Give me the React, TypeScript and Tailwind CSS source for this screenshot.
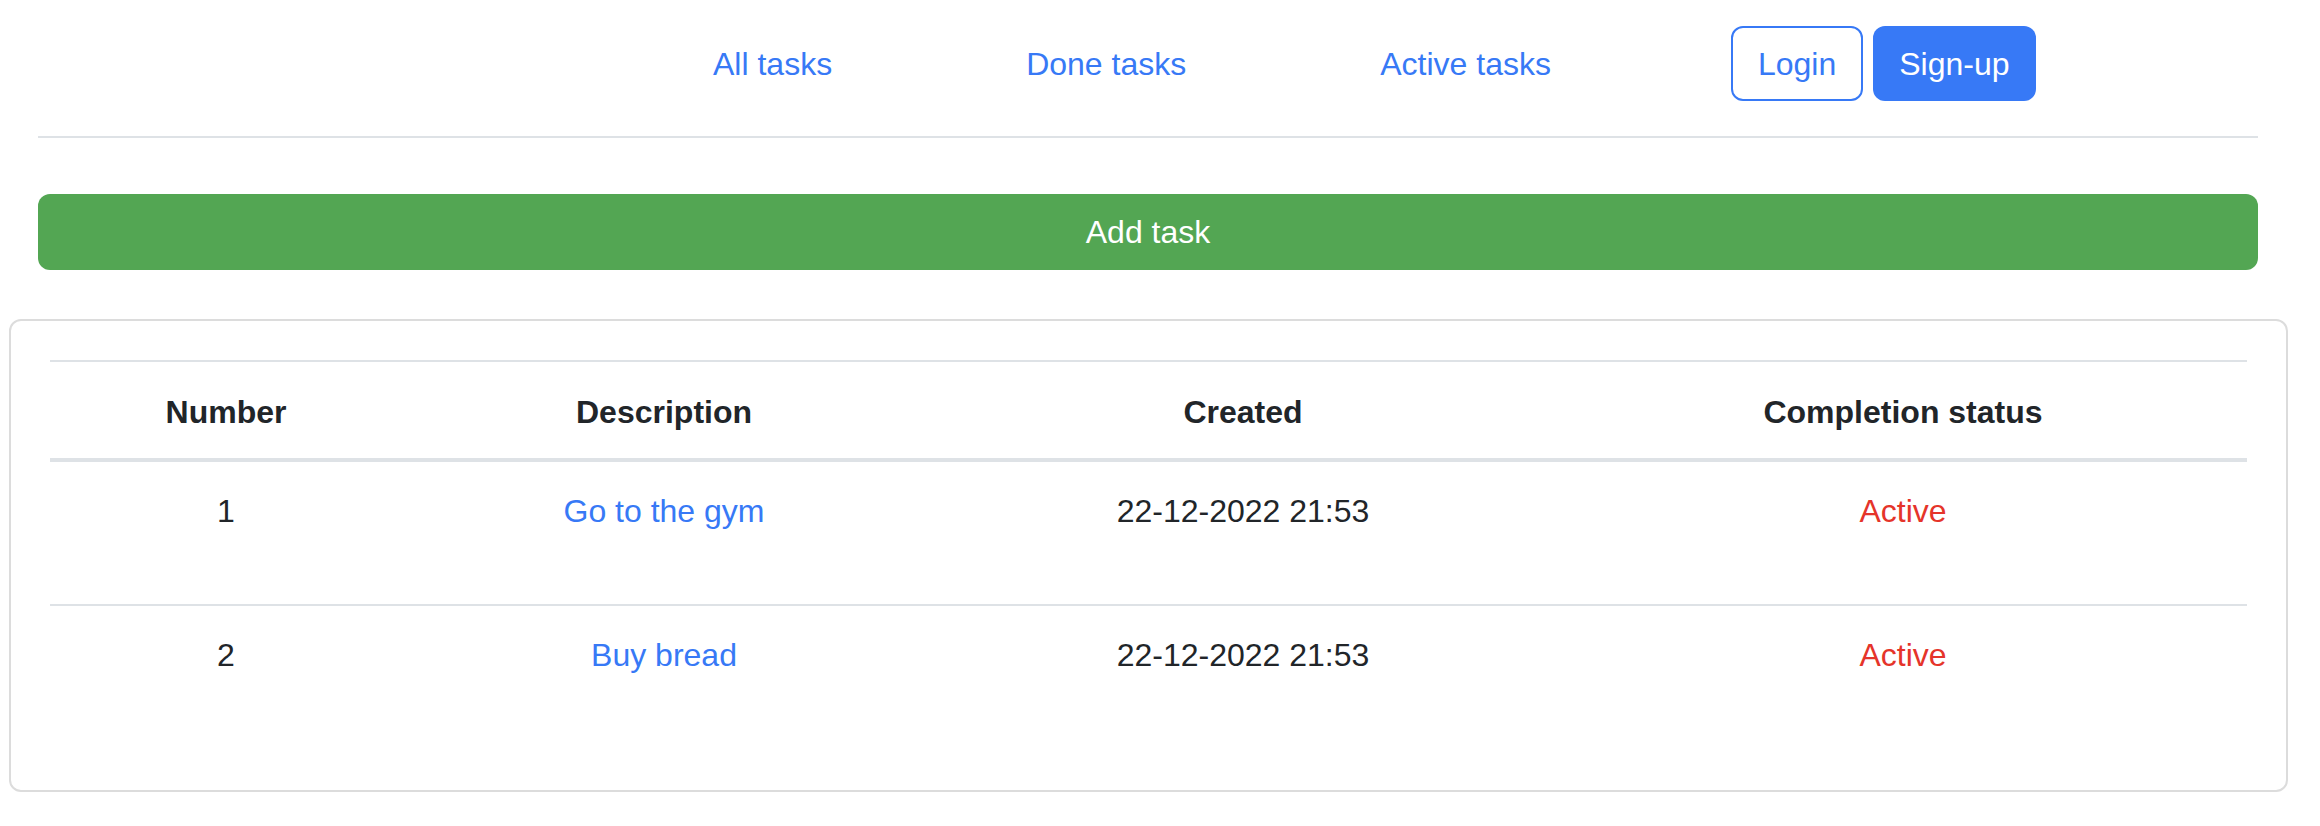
const tasks = [
  { id: 1, description: "Go to the gym", created: "22-12-2022 21:53", status: "Active" },
  { id: 2, description: "Buy bread", created: "22-12-2022 21:53", status: "Active" },
];

const cols = "grid grid-cols-[352px_524px_634px_686px] text-center";

export default function App() {
  return (
    <div className="min-h-screen bg-white font-['Liberation_Sans',Arial,sans-serif] text-[32px] leading-[48px] text-[#212529]">
      <div className="pl-[38px] pr-[62px]">
        <header className="flex items-center h-[127px] pl-[675px]">
          <a href="#" className="text-[#3779f6]">All tasks</a>
          <a href="#" className="ml-[194px] text-[#3779f6]">Done tasks</a>
          <a href="#" className="ml-[194px] text-[#3779f6]">Active tasks</a>
          <div className="ml-[180px] flex gap-[10px]">
            <button className="h-[75px] px-[25px] rounded-[12px] border-2 border-[#3779f6] text-[#3779f6]">Login</button>
            <button className="h-[75px] px-[26px] rounded-[12px] bg-[#3779f6] text-white">Sign-up</button>
          </div>
        </header>
        <hr className="mt-[9px] border-t-2 border-[#dee2e6]" />
        <button className="mt-[56px] w-full h-[76px] rounded-[12px] bg-[#53a653] text-white">Add task</button>
      </div>

      <div className="mt-[49px] ml-[9px] w-[2279px] rounded-[12px] border-2 border-[#dcdcdc] px-[39px] pt-[39px] pb-[40px]">
        <div className="border-t-2 border-[#dee2e6]">
          <div className={`${cols} font-bold pt-[26px] pb-[22px] border-b-4 border-[#dee2e6]`}>
            <div>Number</div>
            <div>Description</div>
            <div>Created</div>
            <div>Completion status</div>
          </div>
          {tasks.map((t, i) => (
            <div
              key={t.id}
              className={`${cols} h-[144px] pt-[25px] ${i < tasks.length - 1 ? "border-b-2 border-[#dee2e6]" : ""}`}
            >
              <div>{t.id}</div>
              <div>
                <a href="#" className="text-[#3779f6]">{t.description}</a>
              </div>
              <div>{t.created}</div>
              <div className="text-[#e5342a]">{t.status}</div>
            </div>
          ))}
        </div>
      </div>
    </div>
  );
}
